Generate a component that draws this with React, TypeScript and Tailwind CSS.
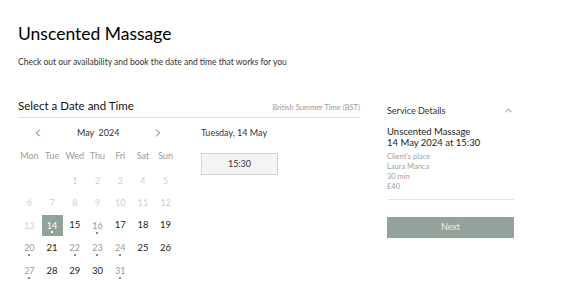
import { ChevronLeft, ChevronRight, ChevronUp } from "lucide-react";

type Day = { n: number; state: "off" | "avail" | "open" | "selected" };

const days: Day[] = [
  ...[1, 2, 3, 4, 5, 6, 7, 8, 9, 10, 11, 12, 13].map((n) => ({ n, state: "off" as const })),
  { n: 14, state: "selected" },
  { n: 15, state: "open" },
  { n: 16, state: "avail" },
  { n: 17, state: "open" },
  { n: 18, state: "open" },
  { n: 19, state: "open" },
  { n: 20, state: "avail" },
  { n: 21, state: "open" },
  { n: 22, state: "avail" },
  { n: 23, state: "avail" },
  { n: 24, state: "avail" },
  { n: 25, state: "open" },
  { n: 26, state: "open" },
  { n: 27, state: "avail" },
  { n: 28, state: "open" },
  { n: 29, state: "open" },
  { n: 30, state: "open" },
  { n: 31, state: "avail" },
];

const weekdays = ["Mon", "Tue", "Wed", "Thu", "Fri", "Sat", "Sun"];

function DayCell({ day }: { day: Day }) {
  if (day.state === "selected") {
    return (
      <div className="flex h-[22.6px] items-center justify-center">
        <div className="relative flex h-[21px] w-[21px] items-center justify-center bg-[#8fa39a] text-[9px] text-white">
          {day.n}
          <span className="absolute bottom-[3px] left-1/2 h-[2px] w-[2px] -translate-x-1/2 bg-white" />
        </div>
      </div>
    );
  }
  return (
    <div className="relative flex h-[22.6px] items-center justify-center">
      <span
        className={
          day.state === "off"
            ? "text-[9px] text-[#cfcfcf]"
            : day.state === "avail"
            ? "text-[9px] text-[#9a9a9a]"
            : "text-[9.5px] text-[#222]"
        }
      >
        {day.n}
      </span>
      {day.state === "avail" && (
        <span className="absolute bottom-[3px] left-1/2 h-[2px] w-[2px] -translate-x-1/2 bg-[#7d8c85]" />
      )}
    </div>
  );
}

export default function App() {
  return (
    <div
      className="h-[300px] w-[562px] overflow-hidden bg-white text-[#111]"
      style={{ fontFamily: "Lato, 'Noto Sans', sans-serif" }}
    >
      <div className="px-[18px] pt-[22px]">
        <h1 className="text-[17.5px] leading-[24px] text-black">Unscented Massage</h1>
        <p className="mt-[10px] text-[8.5px] leading-[12px] text-[#333]">
          Check out our availability and book the date and time that works for you
        </p>

        <div className="mt-[30px] flex gap-[27px]">
          {/* left: calendar */}
          <div className="w-[342px]">
            <div className="flex items-end justify-between border-b border-[#e2e2e2] pb-[3px]">
              <h2 className="text-[11.5px] leading-[16px] text-[#111]">Select a Date and Time</h2>
              <span className="pb-[1px] text-[7.5px] text-[#9a9a9a]">British Summer Time (BST)</span>
            </div>

            <div className="mt-[7px] flex">
              <div className="w-[159px]">
                <div className="flex h-[16px] items-center">
                  <ChevronLeft className="ml-[14px] h-[12px] w-[12px] text-[#222]" strokeWidth={1.4} />
                  <span className="ml-[33px] text-[9px] text-[#333]">May&nbsp;&nbsp;2024</span>
                  <ChevronRight className="ml-[32px] h-[12px] w-[12px] text-[#222]" strokeWidth={1.4} />
                </div>
                <div className="mt-[8px] grid grid-cols-7">
                  {weekdays.map((w) => (
                    <div key={w} className="flex h-[14px] items-center justify-center text-[9px] text-[#9a9a9a]">
                      {w}
                    </div>
                  ))}
                </div>
                <div className="mt-[6px] grid grid-cols-7">
                  <div />
                  <div />
                  {days.map((d) => (
                    <DayCell key={d.n} day={d} />
                  ))}
                </div>
              </div>

              <div className="ml-[24px] flex-1">
                <div className="flex h-[16px] items-center text-[9px] text-[#333]">Tuesday, 14 May</div>
                <button className="mt-[12px] flex h-[22px] w-[77px] items-center justify-center border border-[#d2d2d2] bg-[#f3f4f3] text-[9px] text-[#333]">
                  15:30
                </button>
              </div>
            </div>
          </div>

          {/* right: service details */}
          <div className="w-[127px] pt-[6px]">
            <div className="flex items-center justify-between">
              <span className="text-[9px] text-[#333]">Service Details</span>
              <ChevronUp className="h-[11px] w-[11px] text-[#333]" strokeWidth={1.4} />
            </div>
            <div className="mt-[8px] text-[9.5px] leading-[11.5px] text-[#222]">
              <div>Unscented Massage</div>
              <div>14 May 2024 at 15:30</div>
            </div>
            <div className="mt-[3px] text-[7.5px] leading-[10px] text-[#a0a0a0]">
              <div>Client's place</div>
              <div>Laura Manca</div>
              <div>30 min</div>
              <div>£40</div>
            </div>
            <div className="mt-[7px] border-b border-[#e2e2e2]" />
            <button className="mt-[17px] flex h-[21px] w-full items-center justify-center bg-[#93a39b] text-[9px] text-[#eef1ef]">
              Next
            </button>
          </div>
        </div>
      </div>
    </div>
  );
}
